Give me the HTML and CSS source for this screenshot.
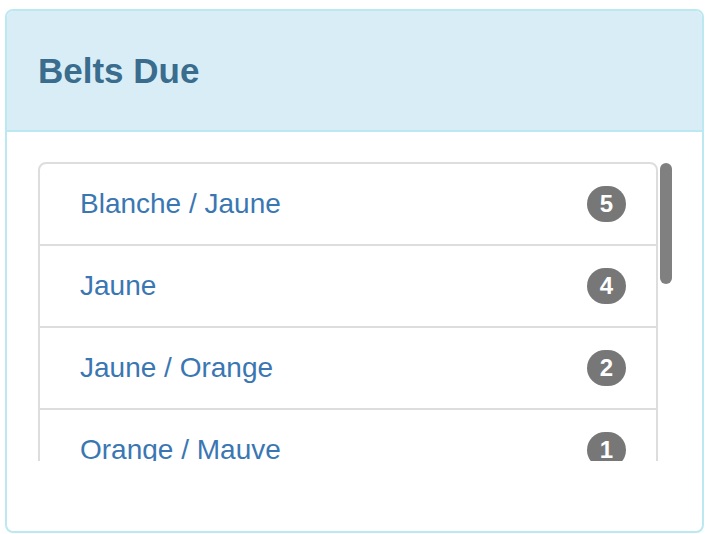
FILE: index.html
```html
<!DOCTYPE html>
<html>
<head>
<meta charset="utf-8">
<link rel="stylesheet" href="styles.css">
</head>
<body>
<div class="panel">
  <div class="panel-heading">
    <h3 class="panel-title">Belts Due</h3>
  </div>
  <div class="panel-body">
    <div class="scroller">
      <div class="viewport">
        <ul class="list-group">
          <li class="list-item"><a href="#">Blanche / Jaune</a><span class="badge">5</span></li>
          <li class="list-item"><a href="#">Jaune</a><span class="badge">4</span></li>
          <li class="list-item"><a href="#">Jaune / Orange</a><span class="badge">2</span></li>
          <li class="list-item"><a href="#">Orange / Mauve</a><span class="badge">1</span></li>
          <li class="list-item"><a href="#">Mauve</a><span class="badge">3</span></li>
          <li class="list-item"><a href="#">Mauve / Vert</a><span class="badge">2</span></li>
          <li class="list-item"><a href="#">Vert</a><span class="badge">1</span></li>
          <li class="list-item"><a href="#">Vert / Bleu</a><span class="badge">2</span></li>
          <li class="list-item"><a href="#">Bleu</a><span class="badge">1</span></li>
        </ul>
      </div>
      <div class="track"><div class="thumb"></div></div>
    </div>
  </div>
</div>
</body>
</html>
```
FILE: styles.css
```css
html, body {
  margin: 0;
  padding: 0;
  background: #fff;
  font-family: "Liberation Sans", Arial, sans-serif;
}
.panel {
  margin: 9px 4px 0 5px;
  border: 2px solid #bce8f1;
  border-radius: 8px;
  overflow: hidden;
}
.panel-heading {
  background: #d9edf7;
  border-bottom: 2px solid #bce8f1;
  height: 119px;
  display: flex;
  align-items: center;
  padding: 0 31px;
}
.panel-title {
  margin: 0;
  font-size: 35px;
  font-weight: bold;
  color: #3a6d8d;
  line-height: 1;
}
.panel-body {
  padding: 30px 28px 30px 31px;
}
.scroller {
  height: 299px;
  display: flex;
  margin-bottom: 40px;
}
.viewport {
  flex: 1;
  overflow: hidden;
}
.track {
  width: 16px;
  flex: none;
}
.thumb {
  height: 121px;
  margin: 1px 2px 0 2px;
  background: #808080;
  border-radius: 6px;
}
.list-group {
  list-style: none;
  margin: 0;
  padding: 0;
}
.list-item {
  display: flex;
  align-items: center;
  justify-content: space-between;
  padding: 20px 30px 20px 40px;
  height: 40px;
  border: 2px solid #ddd;
  margin-bottom: -2px;
  font-size: 28px;
}
.list-item:first-child {
  border-top-left-radius: 8px;
  border-top-right-radius: 8px;
}
.list-item a {
  color: #3a77b2;
  text-decoration: none;
}
.badge {
  background: #777;
  color: #fff;
  font-weight: bold;
  font-size: 24px;
  line-height: 24px;
  padding: 6px 13px;
  border-radius: 20px;
}
```
